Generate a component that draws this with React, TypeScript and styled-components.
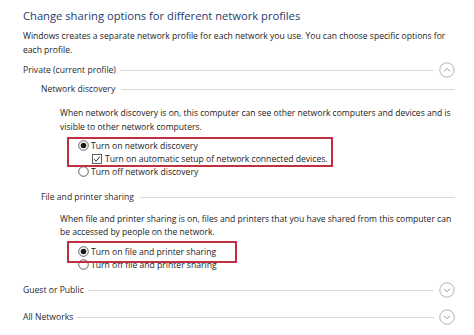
import React from "react";
import styled, { createGlobalStyle } from "styled-components";

const GlobalStyle = createGlobalStyle`
  html, body {
    margin: 0;
    padding: 0;
    background: #ffffff;
  }
  body {
    font-family: "Open Sans", "Noto Sans", sans-serif;
    color: #222222;
  }
`;

const ChevronCircle = ({ up }: { up?: boolean }) => (
  <ChevronSvg viewBox="0 0 16 16" width="16" height="16">
    <circle cx="8" cy="8" r="7.2" fill="none" stroke="#aaaaaa" strokeWidth="0.9" />
    {up ? (
      <path d="M5 9.4 L8 6.4 L11 9.4" fill="none" stroke="#8c8c8c" strokeWidth="0.9" />
    ) : (
      <path d="M5 6.8 L8 9.8 L11 6.8" fill="none" stroke="#8c8c8c" strokeWidth="0.9" />
    )}
  </ChevronSvg>
);

const Radio = ({ checked }: { checked?: boolean }) => (
  <RadioSvg viewBox="0 0 11 11" width="11" height="11">
    <circle cx="5.5" cy="5.5" r="4.8" fill="#fff" stroke="#3a3a3a" strokeWidth="0.8" />
    {checked && <circle cx="5.5" cy="5.5" r="2.8" fill="#1a1a1a" />}
  </RadioSvg>
);

const Check = () => (
  <CheckSvg viewBox="0 0 10 10" width="10" height="10">
    <rect x="0.5" y="0.5" width="9" height="9" fill="#fff" stroke="#3a3a3a" strokeWidth="0.8" />
    <path d="M2.2 5.2 L4.1 7.2 L7.9 2.6" fill="none" stroke="#1a1a1a" strokeWidth="0.9" />
  </CheckSvg>
);

export default function App() {
  return (
    <>
      <GlobalStyle />
      <Page>
        <Title>Change sharing options for different network profiles</Title>
        <Intro>
          Windows creates a separate network profile for each network you use. You can choose specific options for
          <br />
          each profile.
        </Intro>

        <ProfileRow $top={5}>
          <ProfileLabel>Private (current profile)</ProfileLabel>
          <Rule />
          <ChevronCircle up />
        </ProfileRow>

        <GroupRow $top={4}>
          <GroupLabel>Network discovery</GroupLabel>
          <Rule />
        </GroupRow>
        <Body $top={10}>
          <Text>
            When network discovery is on, this computer can see other network computers and devices and is
            <br />
            visible to other network computers.
          </Text>
          <Options $pad={2}>
            <Highlight $width={266} $height={30} />
            <Option>
              <Radio checked />
              <span>Turn on network discovery</span>
            </Option>
            <SubOption>
              <Check />
              <span>Turn on automatic setup of network connected devices.</span>
            </SubOption>
            <Option>
              <Radio />
              <span>Turn off network discovery</span>
            </Option>
          </Options>
        </Body>

        <GroupRow $top={12}>
          <GroupLabel>File and printer sharing</GroupLabel>
          <Rule />
        </GroupRow>
        <Body $top={9}>
          <Text $lh={12.5}>
            When file and printer sharing is on, files and printers that you have shared from this computer can
            <br />
            be accessed by people on the network.
          </Text>
          <Options $pad={4}>
            <Highlight $width={170} $height={22} />
            <Option>
              <Radio checked />
              <span>Turn on file and printer sharing</span>
            </Option>
            <Option>
              <Radio />
              <span>Turn off file and printer sharing</span>
            </Option>
          </Options>
        </Body>

        <ProfileRow $top={11}>
          <ProfileLabel>Guest or Public</ProfileLabel>
          <Rule />
          <ChevronCircle />
        </ProfileRow>
        <ProfileRow $top={11}>
          <ProfileLabel>All Networks</ProfileLabel>
          <Rule />
          <ChevronCircle />
        </ProfileRow>
      </Page>
    </>
  );
}

const Page = styled.div`
  width: 474px;
  height: 335px;
  box-sizing: border-box;
  padding: 7px 19px 0 23px;
  overflow: hidden;
`;

const Title = styled.h1`
  margin: 0;
  font-size: 11.2px;
  font-weight: 400;
  line-height: 18px;
  color: #1f3a70;
  white-space: nowrap;
`;

const Intro = styled.p`
  margin: 4px 0 0;
  font-size: 8.55px;
  line-height: 14px;
  color: #222222;
  white-space: nowrap;
`;

const ProfileRow = styled.div<{ $top: number }>`
  display: flex;
  align-items: center;
  gap: 4px;
  height: 16px;
  margin-top: ${(p) => p.$top}px;
`;

const ProfileLabel = styled.span`
  font-size: 8.6px;
  color: #2a2a2a;
  white-space: nowrap;
`;

const Rule = styled.div`
  flex: 1;
  height: 1px;
  background: #dadada;
`;

const ChevronSvg = styled.svg`
  flex: none;
  display: block;
  margin-left: 1px;
`;

const GroupRow = styled.div<{ $top: number }>`
  display: flex;
  align-items: center;
  gap: 6px;
  height: 14px;
  margin: ${(p) => p.$top}px 0 0 18px;
`;

const GroupLabel = styled.span`
  font-size: 8.6px;
  color: #2a2a2a;
  white-space: nowrap;
`;

const Body = styled.div<{ $top: number }>`
  padding: ${(p) => p.$top}px 0 0 37px;
`;

const Text = styled.p<{ $lh?: number }>`
  margin: 0;
  font-size: 8.55px;
  line-height: ${(p) => p.$lh ?? 14}px;
  color: #222222;
  white-space: nowrap;
`;

const Options = styled.div<{ $pad: number }>`
  position: relative;
  margin-top: 3px;
  padding: ${(p) => p.$pad}px 0 0 18px;
  display: flex;
  flex-direction: column;
`;

const Highlight = styled.div<{ $width: number; $height: number }>`
  position: absolute;
  left: 7px;
  top: 0;
  width: ${(p) => p.$width}px;
  height: ${(p) => p.$height}px;
  border: 2px solid #c12f40;
  box-sizing: border-box;
  pointer-events: none;
`;

const Option = styled.div`
  display: flex;
  align-items: center;
  gap: 2px;
  height: 13px;
  font-size: 8.6px;
  color: #222222;
  white-space: nowrap;
`;

const SubOption = styled(Option)`
  padding-left: 14px;
  gap: 3px;
`;

const RadioSvg = styled.svg`
  flex: none;
  display: block;
`;

const CheckSvg = styled.svg`
  flex: none;
  display: block;
`;
